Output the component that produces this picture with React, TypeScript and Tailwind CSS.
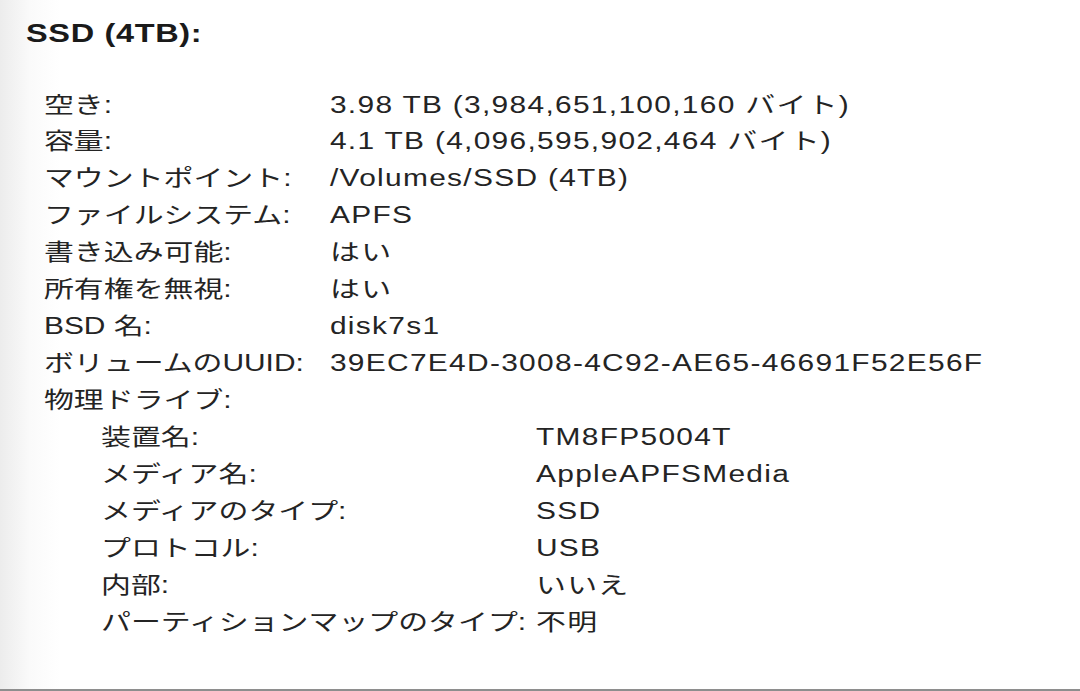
const volume = [
  { label: '空き:', value: '3.98 TB (3,984,651,100,160 バイト)' },
  { label: '容量:', value: '4.1 TB (4,096,595,902,464 バイト)' },
  { label: 'マウントポイント:', value: '/Volumes/SSD (4TB)' },
  { label: 'ファイルシステム:', value: 'APFS' },
  { label: '書き込み可能:', value: 'はい' },
  { label: '所有権を無視:', value: 'はい' },
  { label: 'BSD 名:', value: 'disk7s1' },
  { label: 'ボリュームのUUID:', value: '39EC7E4D-3008-4C92-AE65-46691F52E56F' },
]

const drive = [
  { label: '装置名:', value: 'TM8FP5004T' },
  { label: 'メディア名:', value: 'AppleAPFSMedia' },
  { label: 'メディアのタイプ:', value: 'SSD' },
  { label: 'プロトコル:', value: 'USB' },
  { label: '内部:', value: 'いいえ' },
  { label: 'パーティションマップのタイプ:', value: '不明' },
]

function Row({ label, value, labelWidth }: { label: string; value: string; labelWidth: string }) {
  return (
    <div className="flex whitespace-nowrap leading-[36.93px]">
      <div className={labelWidth}>{label}</div>
      <div className="tracking-[1px]">{value}</div>
    </div>
  )
}

export default function App() {
  return (
    <div className="h-[691px] w-full overflow-hidden border-b-2 border-[#8e8e8e] bg-[linear-gradient(to_right,#ececec,#fafafa_30px,#ffffff_60px)] font-['Liberation_Sans','Noto_Sans_CJK_JP',sans-serif] text-[#242424]">
      <div className="origin-left scale-x-[1.3] pt-[15px]">
        <h2 className="pl-[20px] text-[25px] font-bold leading-[37px] tracking-[0.5px] text-[#1a1a1a]">
          SSD (4TB):
        </h2>
        <div className="mt-[34.5px] pl-[33.8px] text-[23px]">
          {volume.map((row) => (
            <Row key={row.label} label={row.label} value={row.value} labelWidth="w-[220px] shrink-0" />
          ))}
          <div className="leading-[36.93px]">物理ドライブ:</div>
          <div className="pl-[43.9px]">
            {drive.map((row) => (
              <Row key={row.label} label={row.label} value={row.value} labelWidth="w-[334.6px] shrink-0" />
            ))}
          </div>
        </div>
      </div>
    </div>
  )
}
